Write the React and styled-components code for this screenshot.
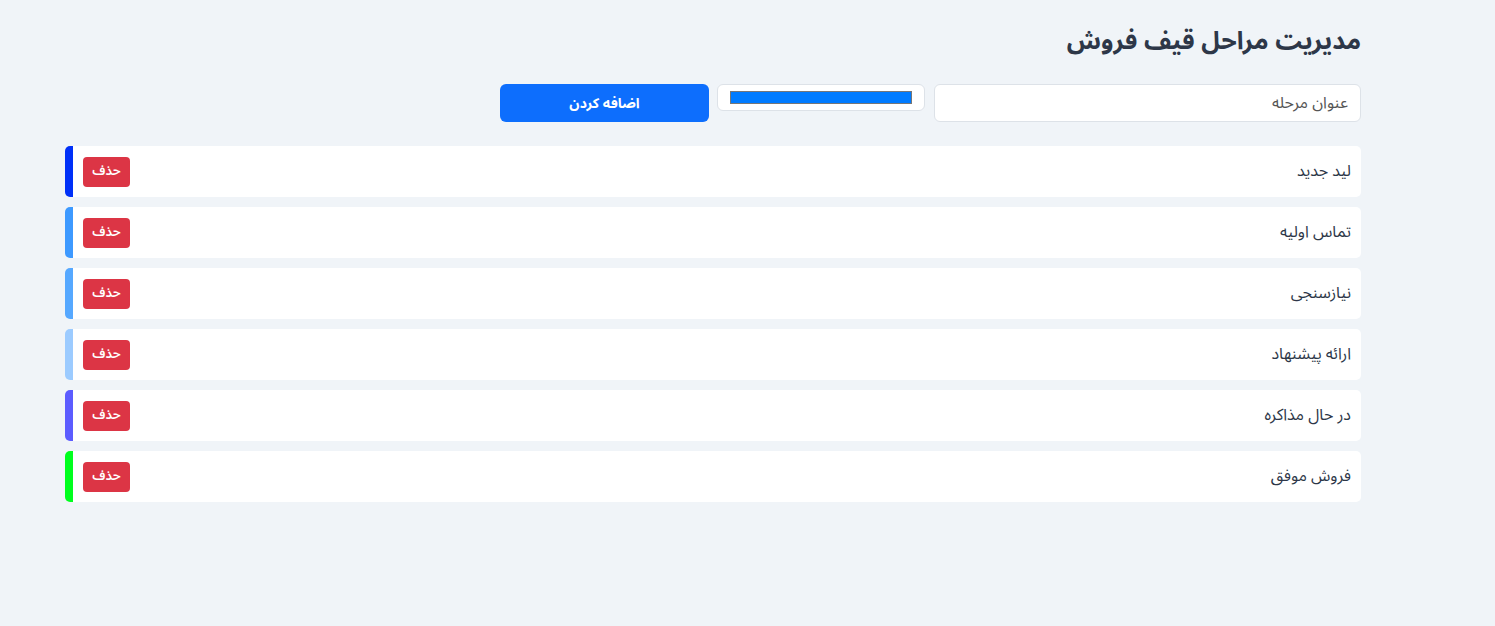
import React, { useState } from "react";
import styled, { createGlobalStyle } from "styled-components";

const GlobalStyle = createGlobalStyle`
  html, body {
    margin: 0;
    padding: 0;
    background: #f0f4f8;
    font-family: "Noto Sans Arabic", "Noto Sans", sans-serif;
  }
`;

const Page = styled.div`
  direction: rtl;
  min-height: 626px;
  box-sizing: border-box;
  padding: 23px 134px 0 65px;
`;

const Title = styled.h2`
  margin: 0 0 25px 0;
  font-size: 25px;
  font-weight: bold;
  line-height: 36px;
  color: #2d3748;
`;

const Form = styled.div`
  display: flex;
  align-items: flex-start;
  gap: 8px;
  margin-bottom: 24px;
`;

const TextInput = styled.input`
  width: 427px;
  height: 38px;
  box-sizing: border-box;
  padding: 0 12px;
  border: 1px solid #dde2e8;
  border-radius: 6px;
  background: #fff;
  font-family: inherit;
  font-size: 16px;
  color: #333;
  outline: none;
  &::placeholder { color: #555; }
`;

const ColorInput = styled.input`
  width: 208px;
  height: 27px;
  box-sizing: border-box;
  margin-right: 1px;
  padding: 0;
  border: 1px solid #dde2e8;
  border-radius: 6px;
  background: #fff;
  cursor: pointer;
  &::-webkit-color-swatch-wrapper { padding: 6px 12px; }
  &::-webkit-color-swatch { border: 1px solid #777; border-radius: 0; }
`;

const AddButton = styled.button`
  width: 209px;
  height: 38px;
  border: none;
  border-radius: 6px;
  background: #0d6efd;
  color: #fff;
  font-family: inherit;
  font-size: 14px;
  font-weight: bold;
  cursor: pointer;
`;

const List = styled.div`
  display: flex;
  flex-direction: column;
  gap: 10px;
`;

const Item = styled.div`
  display: flex;
  align-items: center;
  justify-content: space-between;
  height: 51px;
  box-sizing: border-box;
  padding: 0 10px;
  background: #fff;
  border-radius: 5px;
  border-left: 8px solid ${(p) => p.$color};
`;

const StageName = styled.span`
  font-size: 16px;
  line-height: 24px;
  margin-top: -2px;
  color: #2d3748;
`;

const DeleteButton = styled.button`
  width: 47px;
  height: 30px;
  padding: 0 0 2px;
  border: none;
  border-radius: 4px;
  background: #dc3545;
  color: #fff;
  font-family: inherit;
  font-size: 13px;
  font-weight: 600;
  cursor: pointer;
`;

const initialStages = [
  { id: 1, name: "لید جدید", color: "#0030f8" },
  { id: 2, name: "تماس اولیه", color: "#3d99ff" },
  { id: 3, name: "نیازسنجی", color: "#56a8ff" },
  { id: 4, name: "ارائه پیشنهاد", color: "#9ccbff" },
  { id: 5, name: "در حال مذاکره", color: "#5c5cff" },
  { id: 6, name: "فروش موفق", color: "#00ff1e" },
];

export default function App() {
  const [stages, setStages] = useState(initialStages);
  const [title, setTitle] = useState("");
  const [color, setColor] = useState("#007bff");

  const addStage = () => {
    if (!title.trim()) return;
    setStages([...stages, { id: Date.now(), name: title, color }]);
    setTitle("");
  };

  return (
    <>
      <GlobalStyle />
      <Page>
        <Title>مدیریت مراحل قیف فروش</Title>
        <Form>
          <TextInput
            placeholder="عنوان مرحله"
            value={title}
            onChange={(e) => setTitle(e.target.value)}
          />
          <ColorInput type="color" value={color} onChange={(e) => setColor(e.target.value)} />
          <AddButton onClick={addStage}>اضافه کردن</AddButton>
        </Form>
        <List>
          {stages.map((s) => (
            <Item key={s.id} $color={s.color}>
              <StageName>{s.name}</StageName>
              <DeleteButton onClick={() => setStages(stages.filter((x) => x.id !== s.id))}>
                حذف
              </DeleteButton>
            </Item>
          ))}
        </List>
      </Page>
    </>
  );
}
